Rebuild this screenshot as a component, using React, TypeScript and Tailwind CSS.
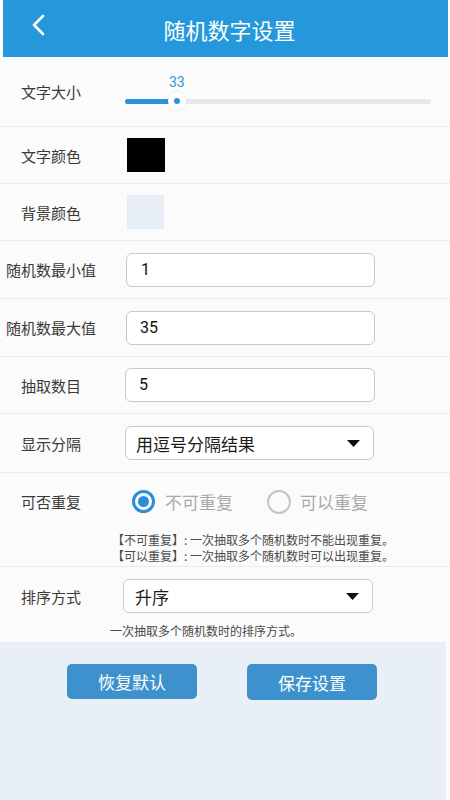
import React from "react";

const CJK = { fontFamily: '"Noto Sans CJK SC", "Noto Sans", sans-serif' };
const NUM = { fontFamily: 'Roboto, "Noto Sans CJK SC", sans-serif' };

function Label({ children }: { children: React.ReactNode }) {
  return (
    <div className="w-[102px] shrink-0 text-center text-[15px] text-[#3a3a3a] leading-none">
      {children}
    </div>
  );
}

function Caret() {
  return (
    <svg width="13" height="7" viewBox="0 0 13 7" className="shrink-0">
      <path d="M0 0 H13 L6.5 7 Z" fill="#111" />
    </svg>
  );
}

export default function App() {
  return (
    <div className="w-[450px] h-[800px] bg-[#fbfbfb] flex flex-col overflow-hidden" style={CJK}>
      {/* Header */}
      <div className="ml-[3px] w-[445px] h-[57px] shrink-0 bg-[#2598dc] flex items-center relative">
        <svg
          width="16"
          height="22"
          viewBox="0 0 16 22"
          className="absolute left-[27px] top-[14px]"
        >
          <path d="M13 2 L4 11 L13 20" fill="none" stroke="#fff" strokeWidth="2.6" strokeLinecap="round" strokeLinejoin="round" />
        </svg>
        <div className="w-full text-center text-white text-[22px] leading-none pl-[8px]">随机数字设置</div>
      </div>

      {/* Row 1: slider */}
      <div className="h-[70px] shrink-0 flex items-center border-b border-[#ebebeb]">
        <Label>文字大小</Label>
        <div className="ml-[23px] w-[306px] flex flex-col pt-[3px]">
          <div className="relative h-[16px]">
            <span className="absolute left-[44px] top-0 text-[14px] leading-none text-[#3596d6]" style={NUM}>
              33
            </span>
          </div>
          <div className="relative h-[20px] flex items-center">
            <div className="w-full h-[5px] rounded-full bg-[#e8e8e8]" />
            <div className="absolute left-0 top-[7.5px] w-[48px] h-[5px] rounded-full bg-[#2a93d9]" />
            <div className="absolute left-[43px] top-[1px] w-[18px] h-[18px] rounded-full bg-white shadow-[0_0_2px_rgba(0,0,0,0.15)] flex items-center justify-center">
              <div className="w-[6px] h-[6px] rounded-full bg-[#2a93d9]" />
            </div>
          </div>
        </div>
      </div>

      {/* Row 2: text color */}
      <div className="h-[57px] shrink-0 flex items-center border-b border-[#ebebeb]">
        <Label>文字颜色</Label>
        <div className="ml-[25px] w-[38px] h-[34px] bg-black" />
      </div>

      {/* Row 3: background color */}
      <div className="h-[57px] shrink-0 flex items-center border-b border-[#ebebeb]">
        <Label>背景颜色</Label>
        <div className="ml-[25px] w-[37px] h-[34px] bg-[#e8eef6]" />
      </div>

      {/* Row 4 */}
      <div className="h-[58px] shrink-0 flex items-center border-b border-[#ebebeb]">
        <Label>随机数最小值</Label>
        <div className="ml-[24px] w-[249px] h-[34px] rounded-[6px] border border-[#c9c9c9] bg-white flex items-center pl-[14px] text-[16px] text-[#111]" style={NUM}>
          1
        </div>
      </div>

      {/* Row 5 */}
      <div className="h-[58px] shrink-0 flex items-center border-b border-[#ebebeb]">
        <Label>随机数最大值</Label>
        <div className="ml-[24px] w-[249px] h-[34px] rounded-[6px] border border-[#c9c9c9] bg-white flex items-center pl-[13px] text-[16px] text-[#111]" style={NUM}>
          35
        </div>
      </div>

      {/* Row 6 */}
      <div className="h-[57px] shrink-0 flex items-center border-b border-[#ebebeb]">
        <Label>抽取数目</Label>
        <div className="ml-[23px] w-[250px] h-[34px] rounded-[6px] border border-[#c9c9c9] bg-white flex items-center pl-[13px] text-[16px] text-[#111]" style={NUM}>
          5
        </div>
      </div>

      {/* Row 7 */}
      <div className="h-[59px] shrink-0 flex items-center border-b border-[#ebebeb]">
        <Label>显示分隔</Label>
        <div className="ml-[23px] w-[249px] h-[34px] rounded-[6px] border border-[#c9c9c9] bg-white flex items-center justify-between pl-[10px] pr-[13px]">
          <span className="text-[17px] text-[#1a1a1a] leading-none">用逗号分隔结果</span>
          <Caret />
        </div>
      </div>

      {/* Row 8: radios + hints */}
      <div className="h-[94px] shrink-0 flex flex-col border-b border-[#ebebeb]">
        <div className="h-[57px] flex items-center">
          <Label>可否重复</Label>
          <div className="ml-[30px] flex items-center">
            <div className="w-[23px] h-[23px] rounded-full border-[3px] border-[#2a90d6] flex items-center justify-center">
              <div className="w-[11px] h-[11px] rounded-full bg-[#2a90d6]" />
            </div>
            <span className="ml-[10px] text-[17px] text-[#a9a9a9] leading-none">不可重复</span>
            <div className="ml-[34px] w-[24px] h-[24px] rounded-full border-[2.5px] border-[#c4c4c4]" />
            <span className="ml-[9px] text-[17px] text-[#a9a9a9] leading-none">可以重复</span>
          </div>
        </div>
        <div className="mt-[3px] pl-[112px] flex flex-col gap-[3px] text-[12px] leading-[13px] text-[#4a4a4a]">
          <div>【不可重复】: 一次抽取多个随机数时不能出现重复。</div>
          <div>【可以重复】: 一次抽取多个随机数时可以出现重复。</div>
        </div>
      </div>

      {/* Row 9: sort */}
      <div className="h-[75px] shrink-0 flex flex-col">
        <div className="h-[58px] flex items-center">
          <Label>排序方式</Label>
          <div className="ml-[21px] w-[250px] h-[34px] rounded-[6px] border border-[#c9c9c9] bg-white flex items-center justify-between pl-[11px] pr-[13px]">
            <span className="text-[17px] text-[#1a1a1a] leading-none">升序</span>
            <Caret />
          </div>
        </div>
        <div className="pl-[110px] text-[12px] leading-none text-[#4a4a4a]">一次抽取多个随机数时的排序方式。</div>
      </div>

      {/* Bottom */}
      <div className="flex-1 w-[446px] bg-[#e9eff6] flex pt-[22px]">
        <div className="ml-[67px] w-[130px] h-[35px] rounded-[5px] bg-[#3d92cd] flex items-center justify-center text-white text-[17px] leading-none">
          恢复默认
        </div>
        <div className="ml-[50px] w-[130px] h-[36px] rounded-[5px] bg-[#3d92cd] flex items-center justify-center text-white text-[17px] leading-none">
          保存设置
        </div>
      </div>
    </div>
  );
}
